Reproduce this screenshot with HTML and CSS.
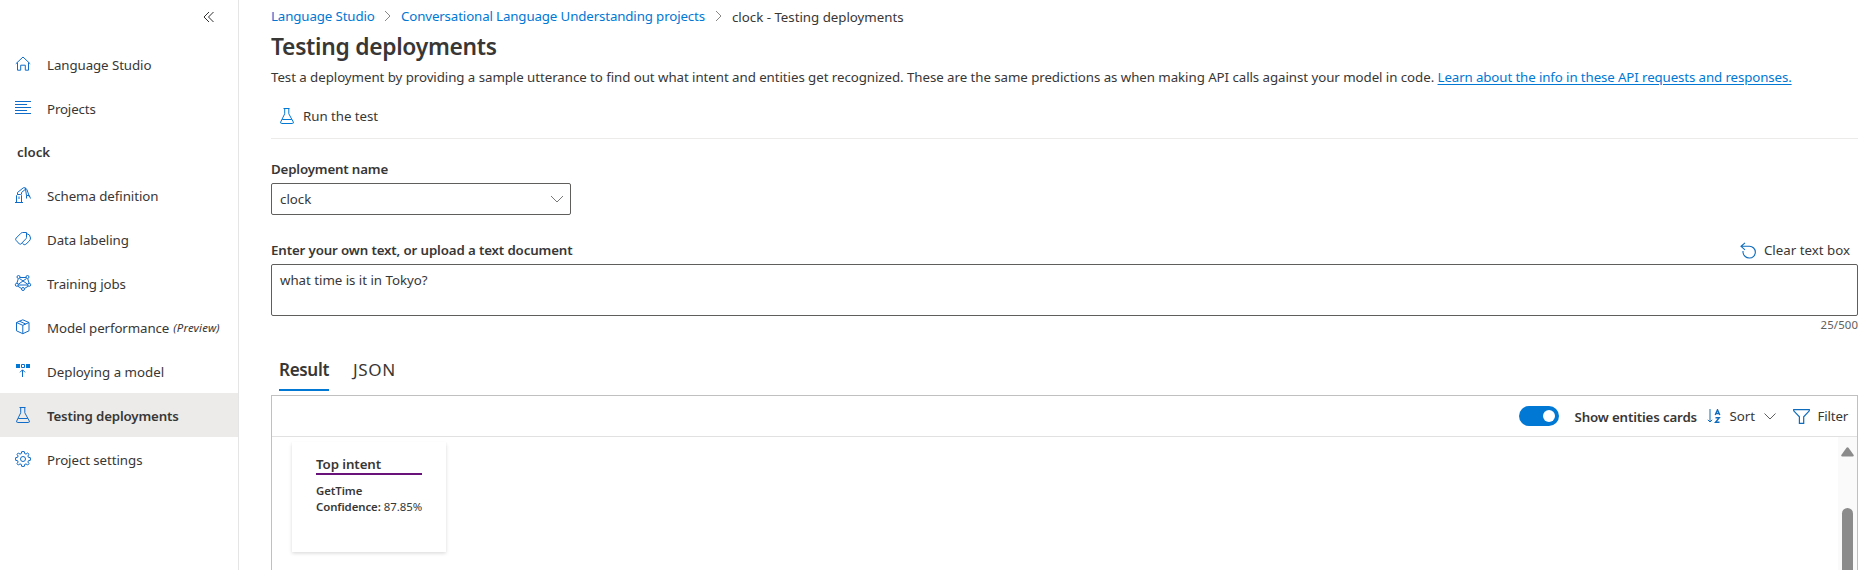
FILE: index.html
```html
<!DOCTYPE html>
<html lang="en">
<head>
<meta charset="utf-8">
<title>Testing deployments - Language Studio</title>
<link rel="stylesheet" href="styles.css">
</head>
<body>
<div class="app">
  <nav class="sidebar">
    <div class="collapse">
      <svg width="12" height="12" viewBox="0 0 12 12" fill="none" stroke="#323130"><path d="M6 1 1 6l5 5M10.500 1l-5 5 5 5"/></svg>
    </div>
    <a class="nav-item"><svg class="nav-icon" viewBox="0 0 16 16"><path d="M.8 7.800 8 1l7.200 6.800M2.500 6.500v7.700h3.200v-5h4.600v5h3.200V6.500"/></svg><span class="t-studio">Language Studio</span></a>
    <a class="nav-item"><svg class="nav-icon" viewBox="0 0 16 16"><path d="M0 1.500h16M0 4.500h12M0 7.500h16M0 10.500h12M0 13.500h16"/></svg><span class="t-projects">Projects</span></a>
    <div class="nav-heading">clock</div>
    <a class="nav-item"><svg class="nav-icon" viewBox="0 0 16 16"><path d="M0 15.500h8M1.500 15.500v-7l1-1h3l1 1v7M4 9.500v2.500M2.500 7.500v-2L8.300.8h2l1.700 2M6.500 7.500v-2l4-3.300M10.300.8l1.200 7.700M12 2.800l2.500 7.200M11.500 8.500h3M11.500 8.500v3M14.500 9l1 2.500"/></svg><span class="t-schema">Schema definition</span></a>
    <a class="nav-item"><svg class="nav-icon" viewBox="0 0 16 16"><path d="M1.200 7 6 2.200q.7-.7 1.600-.7h3.900v5q0 .7-.6 1.300l-5 5.200q-.7.700-1.500 0L1.200 9.500q-1.200-1.200 0-2.500zM11.500 2.500q4 .8 4 4.500 0 1.800-1.300 3.100L10.800 13.300q-1.500 1.200-3.300-.8"/></svg><span class="t-label">Data labeling</span></a>
    <a class="nav-item"><svg class="nav-icon" viewBox="0 0 16 16"><path d="M5 2.500h6M4.500 3.500l8.500 6M11.500 3.500 3 9.500M3.200 4 1.800 8.500M12.800 4l1.400 4.500M3 10h10M2.500 11l4 2.500M13.500 11l-4 2.500"/><circle class="node" cx="3.500" cy="2" r="1.500"/><circle class="node" cx="12.500" cy="2" r="1.500"/><circle class="node" cx="1.800" cy="9.800" r="1.500"/><circle class="node" cx="14.200" cy="9.800" r="1.500"/><circle class="node" cx="8" cy="14" r="1.500"/></svg><span class="t-training">Training jobs</span></a>
    <a class="nav-item"><svg class="nav-icon" viewBox="0 0 16 16"><path d="M7.800.8 14 3.500v8.300l-6.200 2.900-6.300-2.900V3.500zM1.500 3.500l6.300 2.800L14 3.500M7.800 6.300v8.400M4.500 2.200l6.300 2.900"/></svg><span class="t-perf">Model performance</span><em class="preview">(Preview)</em></a>
    <a class="nav-item"><svg class="nav-icon" viewBox="0 0 16 16"><path class="solid" d="M1 1h4v4H1zM11 1h4v4h-4z"/><path d="M6.500 1.500h3v3h-3zM7.500 14V7M5 9.300l2.500-2.500L10 9.300"/></svg><span>Deploying a model</span></a>
    <a class="nav-item selected"><svg class="nav-icon" viewBox="0 0 16 16"><path d="M4.500.5h6M5.700.5v5.300L1.700 14q-.5 1.500 1 1.500h10.600q1.500 0 1-1.500L9.800 5.800V.5M3.200 11.500h9.600"/></svg><span class="t-testing">Testing deployments</span></a>
    <a class="nav-item"><svg class="nav-icon" viewBox="0 0 16 16"><circle cx="8" cy="8" r="2.500"/><path d="m6.700.6-.4 2-1.300.5L3.300 2 2 3.300 3.100 5l-.5 1.300-2 .4v2.600l2 .4.500 1.300L2 12.700 3.300 14 5 12.900l1.300.5.4 2h2.600l.4-2 1.300-.5 1.700 1.100 1.300-1.300-1.100-1.700.5-1.300 2-.4V6.700l-2-.4-.5-1.300L14 3.300 12.700 2 11 3.100l-1.300-.5-.4-2z"/></svg><span class="t-settings">Project settings</span></a>
  </nav>

  <main class="main">
    <div class="breadcrumb">
      <a class="t-crumb1">Language Studio</a>
      <svg width="7" height="12" viewBox="0 0 7 12"><path d="m1 1 5 5-5 5"/></svg>
      <a class="t-crumb2">Conversational Language Understanding projects</a>
      <svg width="7" height="12" viewBox="0 0 7 12"><path d="m1 1 5 5-5 5"/></svg>
      <span class="current">clock - Testing deployments</span>
    </div>
    <h1>Testing deployments</h1>
    <p class="intro">Test a deployment by providing a sample utterance to find out what intent and entities get recognized. These are the same predictions as when making API calls against your model in code. <a>Learn about the info in these API requests and responses.</a></p>
    <div class="commands">
      <svg class="flask" viewBox="0 0 16 16"><path d="M4.500.5h6M5.700.5v5.300L1.700 14q-.5 1.500 1 1.500h10.600q1.500 0 1-1.500L9.800 5.800V.5M3.200 11.500h9.600"/></svg>
      <span>Run the test</span>
    </div>

    <label class="field-label t-deploy">Deployment name</label>
    <div class="select"><span>clock</span><svg width="14" height="8" viewBox="0 0 14 8"><path d="m1 1 6 6 6-6"/></svg></div>

    <div class="text-head">
      <label class="field-label t-enter">Enter your own text, or upload a text document</label>
      <div class="clear"><svg width="16" height="17" viewBox="0 0 16 17"><path d="M5 .8 1 4.300l4 3.500M1 4.300h8.500a5.700 5.700 0 0 1 0 11.700A6.300 6.300 0 0 1 3 10.500V9"/></svg><span>Clear text box</span></div>
    </div>
    <div class="textbox">what time is it in Tokyo?</div>
    <div class="count">25/500</div>

    <div class="tabs"><span class="tab active">Result</span><span class="tab json">JSON</span></div>

    <section class="panel">
      <div class="toolbar">
        <span class="toggle"><span class="knob"></span></span>
        <span class="t-show">Show entities cards</span>
        <svg class="sort-icon" width="14" height="15" viewBox="0 0 14 15"><path d="M3 0v13M.8 10.800 3 13l2.200-2.200"/><path class="az" d="m8.200 6 2.300-5.200L12.800 6M9 4.500h3M8.500 8.700h3.800L8.500 13.300h4"/></svg>
        <span class="t-sort">Sort</span>
        <svg class="chev" width="12" height="7" viewBox="0 0 12 7"><path d="m.5.500 5.500 5.500 5.500-5.500"/></svg>
        <svg class="filter-icon" width="17" height="15" viewBox="0 0 17 15"><path d="M.7.600h15.600v1.200l-5.600 6v6.600H6.400V7.800L.7 1.800z"/></svg>
        <span class="t-filter">Filter</span>
      </div>
      <div class="results">
        <article class="card">
          <h2>Top intent</h2>
          <div class="intent">GetTime</div>
          <div><b>Confidence:</b> 87.85%</div>
        </article>
        <div class="scrollbar">
          <svg width="13" height="10" viewBox="0 0 13 10"><path d="M5.500.8q1-1.300 2 0l5 7q.9 1.700-1 1.700h-10q-1.900 0-1-1.700z"/></svg>
          <div class="thumb"></div>
        </div>
      </div>
    </section>
  </main>
</div>
</body>
</html>
```
FILE: styles.css
```css
* { box-sizing: border-box; }

body {
  margin: 0;
  height: 570px;
  overflow: hidden;
  background: #fff;
  color: #383736;
  font: 13.3px/20px "Noto Sans", "Open Sans", sans-serif;
}

svg { display: block; flex: none; fill: none; }
h1, h2, p { margin: 0; }
.app { display: flex; height: 570px; white-space: nowrap; }

/* Sidebar */
.sidebar { width: 239px; flex: none; border-right: 1px solid #e5e5e5; }
.collapse { height: 42px; padding: 11px 0 0 203px; }
.nav-item { display: flex; align-items: center; height: 44px; padding-left: 15px; }
.nav-item span, .nav-item em { padding-top: 2px; }
.nav-item.selected { background: #edebe9; font-weight: 600; }
.nav-icon { width: 16px; height: 16px; margin-right: 16px; stroke: #0f6cc8; overflow: visible; }
.nav-icon .solid { fill: #0078d4; stroke: none; }
.nav-icon .node { fill: #fff; }
.nav-heading { height: 43px; padding-left: 17px; line-height: 45px; font-weight: 600; }
.preview { margin-left: 4px; font-size: 11.4px; letter-spacing: .2px; }
.t-studio { letter-spacing: -.08px; }
.t-projects { letter-spacing: -.15px; }
.t-schema, .t-label, .t-settings { letter-spacing: -.07px; }
.t-training { letter-spacing: -.12px; }
.t-perf { letter-spacing: -.1px; }
.t-testing { letter-spacing: -.17px; }

/* Page header */
.main { flex: 1; min-width: 0; padding: 6px 9px 0 32px; display: flex; flex-direction: column; }
.main > * { flex: none; }
.breadcrumb { display: flex; align-items: center; height: 20px; }
.breadcrumb a { color: #0078d4; }
.breadcrumb svg { margin: 0 10px; stroke: #8a8886; }
.t-crumb1 { width: 103px; letter-spacing: -.13px; }
.t-crumb2 { width: 304px; letter-spacing: -.132px; }
.breadcrumb .current { padding-top: 2px; letter-spacing: -.02px; }
h1 { height: 40px; padding-top: 1px; font-size: 22.8px; line-height: 40px; font-weight: 600; letter-spacing: -.28px; }
.intro { height: 22px; line-height: 22px; letter-spacing: -.06px; }
.intro a { color: #0078d4; text-decoration: underline; letter-spacing: -.115px; text-underline-offset: 2px; }
.commands { display: flex; align-items: center; gap: 8px; height: 51px; padding: 6px 0 0 8px; border-bottom: 1px solid #edebe9; letter-spacing: -.05px; }
.flask { width: 16px; height: 16px; stroke: #0078d4; }

/* Form */
.field-label { font-weight: 600; }
.t-deploy { margin-top: 20px; letter-spacing: -.168px; }
.select { display: flex; align-items: center; justify-content: space-between; width: 300px; height: 32px; margin-top: 4px; padding: 0 6px 0 8px; border: 1px solid #605e5c; border-radius: 2px; }
.select svg { stroke: #7a7876; }
.text-head { display: flex; align-items: center; justify-content: space-between; height: 20px; margin-top: 25px; }
.t-enter { letter-spacing: -.135px; }
.clear { display: flex; align-items: center; gap: 8px; padding-right: 8px; }
.clear svg { stroke: #0f6cbd; stroke-width: 1.1; }
.textbox { height: 52px; margin-top: 4px; padding: 5px 8px; border: 1px solid #605e5c; border-radius: 2px; letter-spacing: -.03px; }
.count { height: 18px; font-size: 11.4px; line-height: 18px; text-align: right; color: #605e5c; letter-spacing: .1px; }

/* Tabs */
.tabs { display: flex; gap: 24px; height: 57px; padding: 17px 0 0 8px; }
.tab { height: 40px; font-size: 17.1px; line-height: 37px; }
.tab.active { width: 50px; font-weight: 600; letter-spacing: -.35px; border-bottom: 2px solid #0078d4; }
.tab.json { letter-spacing: .6px; }

/* Result panel */
.main > .panel { flex: 1 1 0; min-height: 0; display: flex; flex-direction: column; margin-top: 4px; border: 1px solid #c0c0c0; border-bottom: 0; overflow: hidden; }
.toolbar { flex: none; display: flex; align-items: center; justify-content: flex-end; height: 41px; padding-right: 9px; border-bottom: 1px solid #e1e1e1; }
.toggle { display: flex; align-items: center; justify-content: flex-end; width: 40px; height: 20px; padding-right: 4px; border-radius: 10px; background: #0078d4; margin-right: 16px; }
.knob { width: 12px; height: 12px; border-radius: 50%; background: #fff; }
.t-show { width: 123px; padding-top: 2px; font-weight: 600; letter-spacing: -.155px; }
.sort-icon { margin: 0 9px; stroke: #0f6cbd; }
.sort-icon .az { stroke-width: 1.4; }
.t-sort { width: 26px; }
.chev { margin: 0 17px 0 8px; stroke: #605e5c; }
.filter-icon { margin-right: 8px; stroke: #0f6cbd; stroke-width: 1.2; }
.t-filter { width: 30.5px; letter-spacing: -.17px; }
.results { flex: 1; display: flex; justify-content: space-between; padding-left: 20px; }
.card { width: 154px; height: 110px; margin-top: 5px; padding: 13px 24px; font-size: 11.4px; line-height: 16px; box-shadow: 0 1.6px 3.6px rgba(0, 0, 0, .15), 0 .3px .9px rgba(0, 0, 0, .12); }
.card h2 { width: 106px; height: 20px; margin-bottom: 8px; font-size: 13.3px; line-height: 19px; font-weight: 600; border-bottom: 2px solid #68127a; letter-spacing: -.09px; }
.card b, .intent { font-weight: 600; letter-spacing: -.08px; }
.scrollbar { width: 19px; padding: 10px 0 0 3px; background: #fafafa; }
.scrollbar svg { fill: #8b8b8b; }
.thumb { width: 11px; height: 100px; margin: 51px 0 0 1px; border-radius: 6px; background: #8b8b8b; }
```
